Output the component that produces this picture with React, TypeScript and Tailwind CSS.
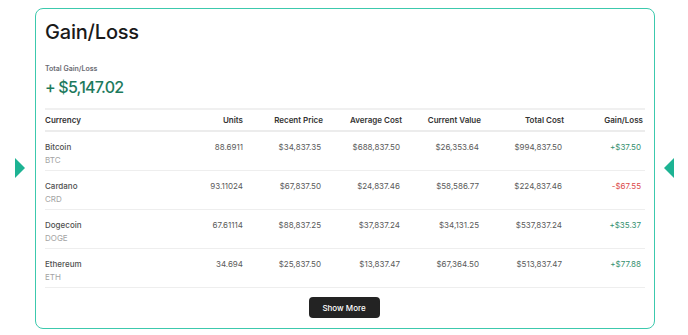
import React from "react";

const rows = [
  { name: "Bitcoin", sym: "BTC", units: "88.6911", recent: "$34,837.35", avg: "$688,837.50", cur: "$26,353.64", total: "$994,837.50", gl: "+$37.50", up: true },
  { name: "Cardano", sym: "CRD", units: "93.11024", recent: "$67,837.50", avg: "$24,837.46", cur: "$58,586.77", total: "$224,837.46", gl: "-$67.55", up: false },
  { name: "Dogecoin", sym: "DOGE", units: "67.61114", recent: "$88,837.25", avg: "$37,837.24", cur: "$34,131.25", total: "$537,837.24", gl: "+$35.37", up: true },
  { name: "Ethereum", sym: "ETH", units: "34.694", recent: "$25,837.50", avg: "$13,837.47", cur: "$67,364.50", total: "$513,837.47", gl: "+$77.88", up: true },
];

const cols = "grid grid-cols-[118px_80px_80px_79px_79px_83px_79px]";

export default function App() {
  return (
    <div className="flex items-center pl-[15px] pt-[8px] bg-white" style={{ fontFamily: "Inter, 'Noto Sans', sans-serif" }}>
      <svg width="10" height="20" viewBox="0 0 10 20" className="shrink-0 -mt-[2px]">
        <polygon points="0,0 10,10 0,20" fill="#1db393" />
      </svg>
      <div className="ml-[10px] w-[620px] h-[321px] border border-[#3cc9ad] rounded-[8px] px-[9px] pt-[11px] flex flex-col">
        <div className="text-[20px] leading-[24px] font-medium text-[#1a1a1a] tracking-[-0.01em]">Gain/Loss</div>
        <div className="mt-[20px] text-[7px] leading-[10px] font-semibold text-[#6b6b73]">Total Gain/Loss</div>
        <div className="mt-[2px] text-[16px] leading-[22px] font-medium text-[#1d7a5d] tracking-[-0.05em]">+ $5,147.02</div>
        <div className="mt-[10px] border-t-2 border-[#f0f0f0]">
          <div className={`${cols} h-[22px] items-center text-[8px] font-semibold text-[#333] border-b-2 border-[#ececec]`}>
            <div>Currency</div>
            <div className="text-right">Units</div>
            <div className="text-right">Recent Price</div>
            <div className="text-right">Average Cost</div>
            <div className="text-right">Current Value</div>
            <div className="text-right">Total Cost</div>
            <div className="text-right">Gain/Loss</div>
          </div>
          {rows.map((r) => (
            <div key={r.name} className={`${cols} h-[39px] pt-[9px] border-b border-[#eeeeee] text-[8px] leading-[13px] text-[#5a5a5a]`}>
              <div className="flex flex-col">
                <span className="text-[#505050] font-medium">{r.name}</span>
                <span className="text-[#a3a3a3]">{r.sym}</span>
              </div>
              <div className="text-right">{r.units}</div>
              <div className="text-right pr-[2px]">{r.recent}</div>
              <div className="text-right pr-[2px]">{r.avg}</div>
              <div className="text-right pr-[2px]">{r.cur}</div>
              <div className="text-right pr-[2px]">{r.total}</div>
              <div className={`text-right pr-[2px] ${r.up ? "text-[#35906f]" : "text-[#dc4a4a]"}`}>{r.gl}</div>
            </div>
          ))}
        </div>
        <div className="flex justify-center mt-[9px]">
          <button className="w-[71px] h-[21px] -ml-[2px] bg-[#232323] rounded-[4px] text-white text-[8px] font-medium">Show More</button>
        </div>
      </div>
      <svg width="10" height="20" viewBox="0 0 10 20" className="ml-[9px] shrink-0 -mt-[2px]">
        <polygon points="10,0 0,10 10,20" fill="#1db393" />
      </svg>
    </div>
  );
}
